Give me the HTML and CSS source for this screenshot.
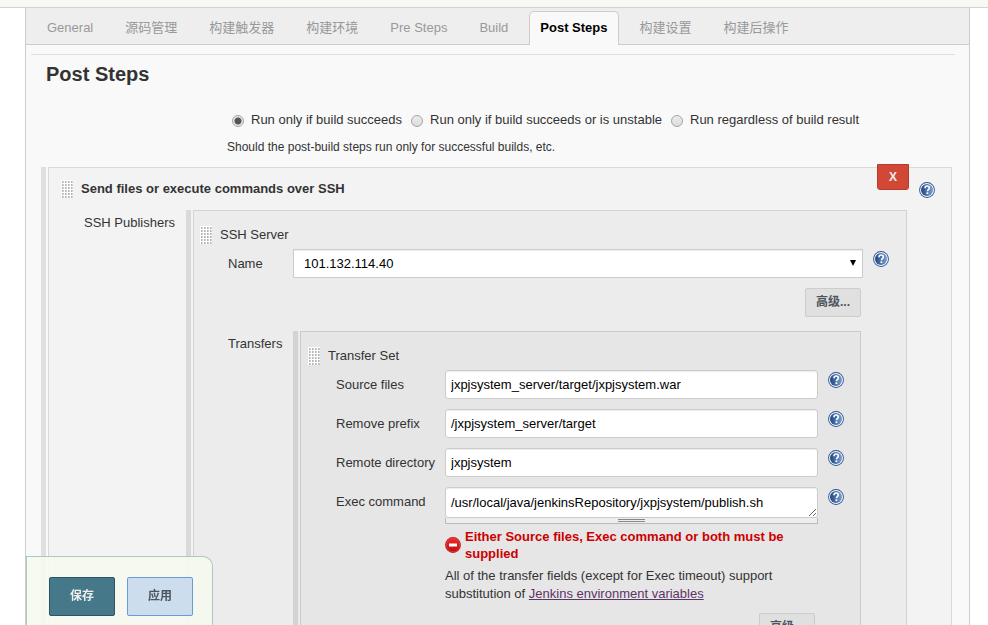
FILE: index.html
```html
<!DOCTYPE html>
<html lang="zh-CN">
<head>
<meta charset="utf-8">
<title>Post Steps</title>
<link rel="stylesheet" href="styles.css">
</head>
<body>
<svg width="0" height="0" class="defs" aria-hidden="true">
  <defs>
    <linearGradient id="blue" x1="0" y1="0" x2="1" y2="0">
      <stop offset="0" stop-color="#1f4580"/>
      <stop offset="1" stop-color="#7ba0cf"/>
    </linearGradient>
    <linearGradient id="red" x1="0" y1="0" x2="0" y2="1">
      <stop offset="0" stop-color="#ee2a2a"/>
      <stop offset="1" stop-color="#c40a0a"/>
    </linearGradient>
    <symbol id="help" viewBox="0 0 16 16">
      <circle cx="8" cy="8" r="7.9" fill="#2c528f"/>
      <circle cx="8" cy="8" r="7" fill="#f1f5fb"/>
      <circle cx="8" cy="8" r="6" fill="url(#blue)"/>
      <path d="M6 6.200C6 4.700 6.900 4 8.100 4s2.200.7 2.200 1.900c0 1.600-1.900 1.700-1.900 3.400" fill="none" stroke="#fff" stroke-width="1.600"/>
      <rect x="7.500" y="10.300" width="1.800" height="1.800" fill="#fff"/>
    </symbol>
  </defs>
</svg>
<div class="topbar"></div>
<main class="config">
  <nav class="tabs">
    <a href="#general">General</a>
    <a href="#scm">源码管理</a>
    <a href="#triggers">构建触发器</a>
    <a href="#environment">构建环境</a>
    <a href="#pre">Pre Steps</a>
    <a href="#build">Build</a>
    <a href="#post" class="active">Post Steps</a>
    <a href="#settings">构建设置</a>
    <a href="#actions">构建后操作</a>
  </nav>
  <form class="section">
    <h1>Post Steps</h1>
    <div class="radios">
      <label><input type="radio" name="when" checked>Run only if build succeeds</label>
      <label><input type="radio" name="when">Run only if build succeeds or is unstable</label>
      <label><input type="radio" name="when">Run regardless of build result</label>
    </div>
    <p class="description">Should the post-build steps run only for successful builds, etc.</p>

    <div class="chunk level1">
      <div class="chunk-body">
        <button type="button" class="delete">X</button>
        <div class="chunk-head">
          <span class="grip"></span><strong>Send files or execute commands over SSH</strong>
          <a href="#help" class="help" aria-label="Help"><svg><use href="#help"/></svg></a>
        </div>
        <div class="nested publishers">
          <span class="label">SSH Publishers</span>
          <div class="chunk level2">
            <div class="chunk-body">
              <div class="chunk-head"><span class="grip"></span><span>SSH Server</span></div>
              <div class="row server-row">
                <label for="name">Name</label>
                <div class="select"><select id="name"><option>101.132.114.40</option></select></div>
                <a href="#help" class="help" aria-label="Help"><svg><use href="#help"/></svg></a>
              </div>
              <div class="more"><button type="button" class="advanced">高级...</button></div>
              <div class="nested transfers">
                <span class="label">Transfers</span>
                <div class="chunk level3">
                  <div class="chunk-body">
                    <div class="chunk-head"><span class="grip"></span><span>Transfer Set</span></div>
                    <div class="row">
                      <label for="source">Source files</label>
                      <input type="text" id="source" value="jxpjsystem_server/target/jxpjsystem.war">
                      <a href="#help" class="help" aria-label="Help"><svg><use href="#help"/></svg></a>
                    </div>
                    <div class="row">
                      <label for="prefix">Remove prefix</label>
                      <input type="text" id="prefix" value="/jxpjsystem_server/target">
                      <a href="#help" class="help" aria-label="Help"><svg><use href="#help"/></svg></a>
                    </div>
                    <div class="row">
                      <label for="remote">Remote directory</label>
                      <input type="text" id="remote" value="jxpjsystem">
                      <a href="#help" class="help" aria-label="Help"><svg><use href="#help"/></svg></a>
                    </div>
                    <div class="row">
                      <label for="exec">Exec command</label>
                      <div class="exec-field">
                        <textarea id="exec" rows="1">/usr/local/java/jenkinsRepository/jxpjsystem/publish.sh</textarea>
                        <div class="handle"></div>
                        <div class="error">
                          <svg viewBox="0 0 16 16"><circle cx="8" cy="8" r="7.900" fill="#b30d0d"/><circle cx="8" cy="8" r="6.900" fill="url(#red)" stroke="#e86a6a" stroke-width=".5"/><rect x="4" y="6.500" width="8" height="3" fill="#fff"/></svg>
                          <span>Either Source files, Exec command or both must be supplied</span>
                        </div>
                        <p class="note">All of the transfer fields (except for Exec timeout) support substitution of <a href="#variables">Jenkins environment variables</a></p>
                      </div>
                      <a href="#help" class="help" aria-label="Help"><svg><use href="#help"/></svg></a>
                    </div>
                    <div class="more"><button type="button" class="advanced">高级...</button></div>
                  </div>
                </div>
              </div>
            </div>
          </div>
        </div>
      </div>
    </div>
  </form>
</main>
<div class="savebar">
  <button type="button" class="save">保存</button>
  <button type="button" class="apply">应用</button>
</div>
</body>
</html>
```
FILE: styles.css
```css
* { box-sizing: border-box; }

body {
  margin: 0;
  height: 100vh;
  overflow: hidden;
  display: flex;
  flex-direction: column;
  background: #fff;
  color: #333;
  font: 13px/18px "Liberation Sans", "Noto Sans CJK SC", sans-serif;
}

button, input, select, textarea { font: inherit; margin: 0; }
h1, p { margin: 0; }
.defs { position: absolute; }

.topbar {
  flex: none;
  height: 8px;
  background: #f6faf2;
  border-bottom: 1px solid #d3d3cf;
}

.config {
  flex: none;
  margin: 0 18px 0 25px;
  border: solid #ccc;
  border-width: 0 1px;
  background: #f9f9f9;
}

.tabs {
  display: flex;
  gap: 10px;
  height: 37px;
  padding: 3px 10px 0;
  background: #eee;
  border-bottom: 1px solid #ccc;
}
.tabs a {
  height: 34px;
  padding: 0 10px;
  border: 1px solid transparent;
  border-bottom: 0;
  border-radius: 5px 5px 0 0;
  color: #999;
  line-height: 32px;
  text-decoration: none;
  white-space: nowrap;
}
.tabs .active {
  background: #f9f9f9;
  border-color: #ccc;
  color: #000;
  font-weight: bold;
}

.section {
  margin: 9px 14px 0 5px;
  border-top: 1px solid #ddd;
}
h1 {
  padding: 7px 0 0 15px;
  font-size: 20px;
  line-height: 24px;
}

.radios {
  display: flex;
  gap: 9px;
  padding: 25px 0 0 201px;
}
.radios label {
  display: flex;
  align-items: center;
  gap: 7px;
  white-space: nowrap;
}
.radios input {
  appearance: none;
  width: 12px;
  height: 12px;
  margin-top: 2px;
  border: 1px solid #a5a5a5;
  border-radius: 50%;
  background: linear-gradient(#ededed, #dcdcdc);
}
.radios input:checked {
  background: radial-gradient(circle, #555 0 3px, #e8e8e8 4px);
}
.description {
  padding: 9px 0 11px 196px;
  font-size: 12px;
}

.chunk {
  padding-left: 2px;
  border-left: 5px solid #e0e0e0;
}
.chunk-body {
  position: relative;
  border: 1px solid #d9d9d9;
  background: #f3f3f3;
}
.level1 { margin: 0 3px 0 10px; }
.level2 { border-color: #d9d9d9; }
.level2 > .chunk-body { border-color: #d2d2d2; background: #ececec; }
.level3 { border-color: #d3d3d3; }
.level3 > .chunk-body { border-color: #cbcbcb; background: #e6e6e6; }

.chunk-head {
  display: flex;
  gap: 8px;
  padding: 15px 0 5px 6px;
  line-height: 18px;
}
.level1 > .chunk-body > .chunk-head { padding: 12px 16px 12px 12px; }
.level3 .chunk-head { padding-left: 7px; }
.chunk-head .help { margin-left: auto; }
.grip {
  width: 12px;
  height: 18px;
  background:
    linear-gradient(#fff 1px, transparent 1px) 0 0 / 3px 3px,
    linear-gradient(90deg, #fff 1px, #b5b5b5 1px 2px, #d0d0d0 2px) 0 0 / 3px 3px;
}

.delete {
  position: absolute;
  top: -4px;
  right: 42px;
  width: 32px;
  height: 26px;
  padding: 0;
  border: 1px solid #b93a2c;
  border-radius: 0 0 3px 3px;
  background: #d14836;
  color: #eee;
  font-size: 12px;
  font-weight: bold;
}

.nested { display: grid; }
.nested .label { padding-top: 4px; }
.publishers { grid-template-columns: 102px 1fr; padding: 0 44px 16px 35px; }
.transfers { grid-template-columns: 65px 1fr; padding: 14px 45px 16px 34px; }

.row {
  display: grid;
  grid-template-columns: 109px 1fr 26px;
  padding: 0 16px 10px 35px;
}
.row label { line-height: 29px; white-space: nowrap; }
.row .help { margin-left: 10px; }
.server-row {
  grid-template-columns: 65px 1fr 26px;
  padding: 0 17px 10px 34px;
}

.help { height: 18px; padding-top: 2px; }
.help svg { display: block; width: 16px; height: 16px; }

input[type="text"], textarea, select {
  display: block;
  width: 100%;
  height: 29px;
  border: 1px solid #ccc;
  border-radius: 3px;
  background: #fff;
  color: #000;
  box-shadow: inset 0 1px 1px rgba(0, 0, 0, .075);
}
input[type="text"] { padding: 0 5px; }
select {
  appearance: none;
  padding: 0 10px;
  border-radius: 0;
}
.select { position: relative; }
.select::after {
  content: "";
  position: absolute;
  right: 7px;
  top: 11px;
  border: solid transparent;
  border-width: 6px 3px 0;
  border-top-color: #000;
}
textarea {
  height: 31px;
  padding: 6px 5px;
  resize: vertical;
  overflow: hidden;
}
.handle {
  height: 6px;
  margin-bottom: 4px;
  border: solid #bbb;
  border-width: 0 1px 1px;
  background: linear-gradient(#888 0 1px, transparent 1px 2px, #888 2px 3px) center 1px / 27px 3px no-repeat #eee;
}
.error {
  display: flex;
  align-items: center;
  gap: 4px;
  color: #c00;
  font-weight: bold;
  line-height: 17px;
}
.error svg { flex: none; width: 16px; height: 16px; }
.note { padding-top: 5px; }
.note a { color: #5c3566; }

.more { display: flex; justify-content: flex-end; padding-right: 45px; }
.advanced {
  width: 56px;
  height: 29px;
  padding: 0 0 2px;
  border: 1px solid #ccc;
  border-radius: 2px;
  background: #e0e0e0;
  color: #4d545d;
  font-size: 12px;
  font-weight: bold;
}

.savebar {
  position: fixed;
  left: 26px;
  bottom: 0;
  display: flex;
  gap: 12px;
  padding: 20px 19px 9px 22px;
  border: 1px solid #a8ccb8;
  border-bottom: 0;
  border-radius: 0 10px 0 0;
  background: rgba(245, 249, 239, .9);
}
.savebar button {
  width: 66px;
  height: 39px;
  padding: 0 0 2px;
  border: 1px solid #6a9bd8;
  border-radius: 2px;
  background: #ccdded;
  color: #4d545d;
  font-size: 12px;
  font-weight: bold;
}
.savebar .save { border-color: #2b5565; background: #457889; color: #eee; }
```
